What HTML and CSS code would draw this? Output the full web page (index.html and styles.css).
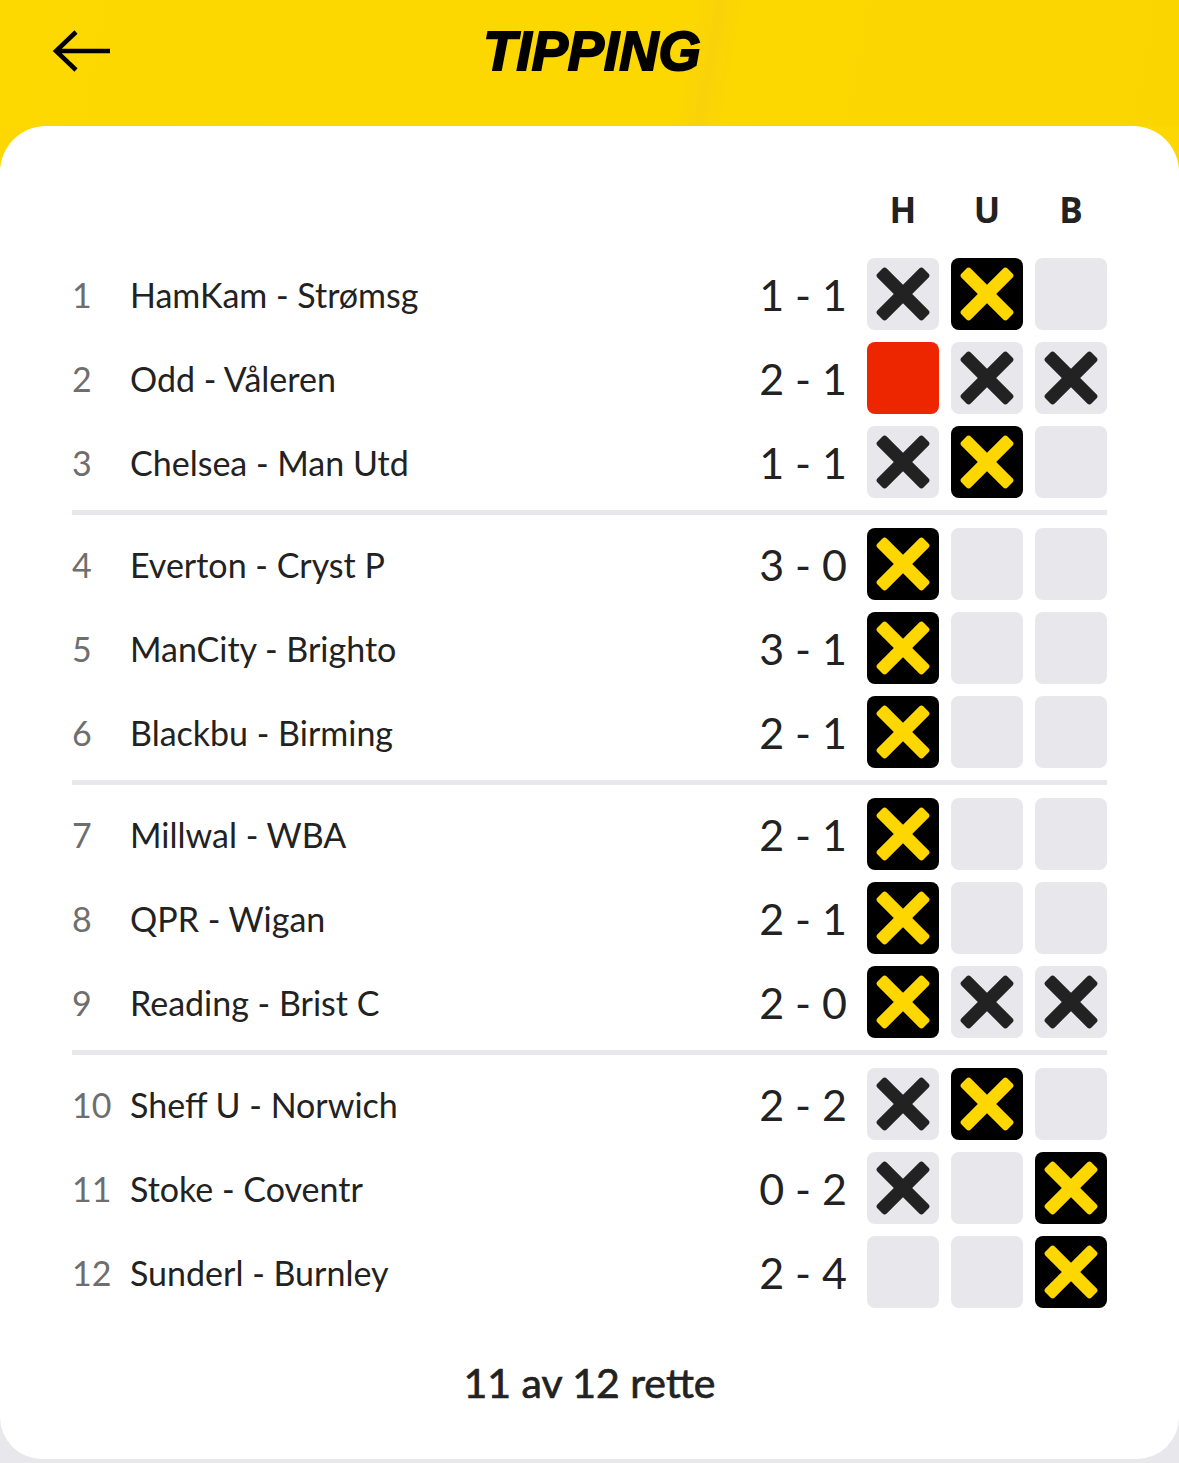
FILE: index.html
```html
<!DOCTYPE html>
<html lang="no">
<head>
<meta charset="utf-8">
<title>Tipping</title>
<link rel="stylesheet" href="styles.css">
</head>
<body>
<svg class="defs" width="0" height="0" aria-hidden="true">
  <symbol id="cross" viewBox="0 0 72 72">
    <rect x="3.5" y="29.5" width="65" height="13" rx="3" transform="rotate(45 36 36)" fill="currentColor"/>
    <rect x="3.5" y="29.5" width="65" height="13" rx="3" transform="rotate(-45 36 36)" fill="currentColor"/>
  </symbol>
</svg>
<div class="page">
  <header class="topbar">
    <button class="back" aria-label="Tilbake">
      <svg width="60" height="44" viewBox="0 0 60 44"><path d="M24 3 L4 22 L24 41 M4 22 H58" fill="none" stroke="#000" stroke-width="4.5"/></svg>
    </button>
    <h1 class="title">TIPPING</h1>
    <span class="spacer"></span>
  </header>

  <main class="card">
    <div class="cols">
      <span>H</span><span>U</span><span>B</span>
    </div>

    <section class="group">
      <div class="row"><span class="num">1</span><span class="name">HamKam - Strømsg</span><span class="score">1 - 1</span><div class="cells"><i class="cell x"><svg><use href="#cross"/></svg></i><i class="cell sel"><svg><use href="#cross"/></svg></i><i class="cell"></i></div></div>
      <div class="row"><span class="num">2</span><span class="name">Odd - Våleren</span><span class="score">2 - 1</span><div class="cells"><i class="cell red"></i><i class="cell x"><svg><use href="#cross"/></svg></i><i class="cell x"><svg><use href="#cross"/></svg></i></div></div>
      <div class="row"><span class="num">3</span><span class="name">Chelsea - Man Utd</span><span class="score">1 - 1</span><div class="cells"><i class="cell x"><svg><use href="#cross"/></svg></i><i class="cell sel"><svg><use href="#cross"/></svg></i><i class="cell"></i></div></div>
    </section>

    <section class="group">
      <div class="row"><span class="num">4</span><span class="name">Everton - Cryst P</span><span class="score">3 - 0</span><div class="cells"><i class="cell sel"><svg><use href="#cross"/></svg></i><i class="cell"></i><i class="cell"></i></div></div>
      <div class="row"><span class="num">5</span><span class="name">ManCity - Brighto</span><span class="score">3 - 1</span><div class="cells"><i class="cell sel"><svg><use href="#cross"/></svg></i><i class="cell"></i><i class="cell"></i></div></div>
      <div class="row"><span class="num">6</span><span class="name">Blackbu - Birming</span><span class="score">2 - 1</span><div class="cells"><i class="cell sel"><svg><use href="#cross"/></svg></i><i class="cell"></i><i class="cell"></i></div></div>
    </section>

    <section class="group">
      <div class="row"><span class="num">7</span><span class="name">Millwal - WBA</span><span class="score">2 - 1</span><div class="cells"><i class="cell sel"><svg><use href="#cross"/></svg></i><i class="cell"></i><i class="cell"></i></div></div>
      <div class="row"><span class="num">8</span><span class="name">QPR - Wigan</span><span class="score">2 - 1</span><div class="cells"><i class="cell sel"><svg><use href="#cross"/></svg></i><i class="cell"></i><i class="cell"></i></div></div>
      <div class="row"><span class="num">9</span><span class="name">Reading - Brist C</span><span class="score">2 - 0</span><div class="cells"><i class="cell sel"><svg><use href="#cross"/></svg></i><i class="cell x"><svg><use href="#cross"/></svg></i><i class="cell x"><svg><use href="#cross"/></svg></i></div></div>
    </section>

    <section class="group">
      <div class="row"><span class="num">10</span><span class="name">Sheff U - Norwich</span><span class="score">2 - 2</span><div class="cells"><i class="cell x"><svg><use href="#cross"/></svg></i><i class="cell sel"><svg><use href="#cross"/></svg></i><i class="cell"></i></div></div>
      <div class="row"><span class="num">11</span><span class="name">Stoke - Coventr</span><span class="score">0 - 2</span><div class="cells"><i class="cell x"><svg><use href="#cross"/></svg></i><i class="cell"></i><i class="cell sel"><svg><use href="#cross"/></svg></i></div></div>
      <div class="row"><span class="num">12</span><span class="name">Sunderl - Burnley</span><span class="score">2 - 4</span><div class="cells"><i class="cell"></i><i class="cell"></i><i class="cell sel"><svg><use href="#cross"/></svg></i></div></div>
    </section>

    <p class="result">11 av 12 rette</p>
  </main>
</div>
</body>
</html>
```
FILE: styles.css
```css
* { box-sizing: border-box; }
html {
  margin: 0; padding: 0;
  background: #e8e7ec linear-gradient(to bottom, #fdd800 0, #fbd604 300px, #e8e7ec 300px) no-repeat;
  background-size: 100% 100%;
}
body {
  margin: 0; padding: 0;
  font-family: "Lato", "DejaVu Sans", sans-serif;
  color: #222;
}
.defs { position: absolute; width: 0; height: 0; overflow: hidden; }
.page { width: 1179px; }

.topbar {
  height: 126px;
  display: flex;
  align-items: flex-start;
  justify-content: space-between;
  padding: 29px 52px 0 52px;
  background: linear-gradient(100deg, #fdd900 0%, #fcd700 58%, #f9d30a 60%, #fdd700 62%, #fbd500 100%);
}
.back {
  width: 64px; height: 44px;
  border: 0; background: none; padding: 0; margin: 0;
  display: flex; align-items: center;
}
.back svg { display: block; }
.spacer { width: 64px; }
.title {
  margin: 0;
  font-family: "Liberation Sans", Arial, sans-serif;
  font-weight: 700;
  font-style: italic;
  font-size: 56px;
  line-height: 44px;
  letter-spacing: 0;
  -webkit-text-stroke: 2px #000;
  color: #000;
  transform: scaleX(0.97);
  margin-left: 6px;
}

.card {
  background: #fff;
  border-radius: 46px 46px 42px 42px;
  height: 1333px;
  padding: 64px 72px 0 72px;
}

.cols {
  display: flex;
  justify-content: flex-end;
  gap: 12px;
  height: 40px;
  margin-bottom: 28px;
}
.cols span {
  width: 72px;
  text-align: center;
  font-family: "Open Sans", "DejaVu Sans", sans-serif;
  font-weight: 700;
  font-size: 35px;
  line-height: 40px;
  color: #222;
}

.group {
  display: flex;
  flex-direction: column;
  gap: 12px;
  padding-bottom: 12px;
  border-bottom: 5px solid #e8e7ec;
  margin-bottom: 13px;
}
.group:last-of-type { border-bottom: 0; padding-bottom: 0; margin-bottom: 0; }

.row {
  display: flex;
  align-items: center;
  height: 72px;
}
.num {
  width: 58px;
  font-size: 34px;
  color: #6e6e6e;
}
.name {
  flex: 1;
  font-size: 34px;
  color: #222;
}
.score {
  font-size: 43px;
  color: #222;
  margin-right: 20px;
  white-space: pre;
}
.cells { display: flex; gap: 12px; }
.cell {
  display: block;
  width: 72px; height: 72px;
  border-radius: 8px;
  background: #e8e7ec;
  color: #222;
}
.cell svg { display: block; width: 72px; height: 72px; }
.cell.sel { background: #000; color: #ffd700; }
.cell.red { background: #ee2600; }

.result {
  margin: 50px 0 0 0;
  text-align: center;
  font-size: 41px;
  font-weight: 400;
  -webkit-text-stroke: 0.7px #222;
  line-height: 50px;
  color: #222;
}
```
